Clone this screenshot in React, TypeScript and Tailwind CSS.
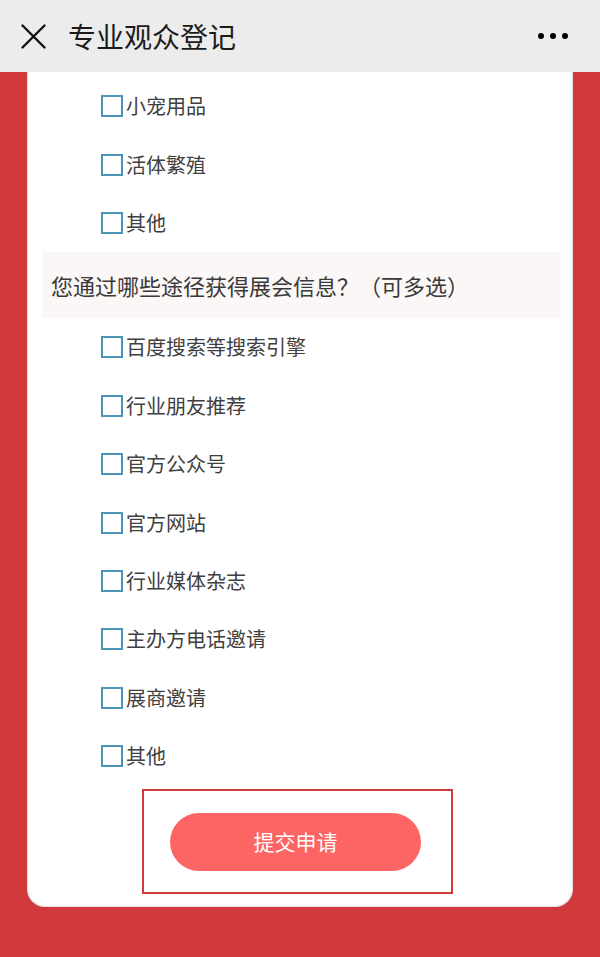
import React from 'react';

const group1 = ['小宠用品', '活体繁殖', '其他'];
const group2 = [
  '百度搜索等搜索引擎',
  '行业朋友推荐',
  '官方公众号',
  '官方网站',
  '行业媒体杂志',
  '主办方电话邀请',
  '展商邀请',
  '其他',
];

const CheckRow: React.FC<{ label: string }> = ({ label }) => (
  <label className="flex h-[58.4px] items-center pl-[73px]">
    <span className="h-[22px] w-[22px] shrink-0 border-2 border-[#4b94b8] bg-white" />
    <span className="ml-[3px] text-[20px] leading-none text-[#404040]">{label}</span>
  </label>
);

const App: React.FC = () => {
  return (
    <div
      className="flex h-[957px] w-[600px] flex-col overflow-hidden bg-[#d03a3d]"
      style={{ fontFamily: '"Noto Sans CJK SC", "Noto Sans", sans-serif' }}
    >
      {/* Header */}
      <div className="flex h-[72px] shrink-0 items-center bg-[#ececec] pl-[21px] pr-[32px]">
        <svg width="25" height="25" viewBox="0 0 25 25" className="shrink-0">
          <path d="M1.5 1.5 L23.5 23.5 M23.5 1.5 L1.5 23.5" stroke="#111" strokeWidth="2.4" strokeLinecap="round" />
        </svg>
        <h1 className="ml-[22px] text-[28px] font-normal leading-none text-[#1b1b1b]">专业观众登记</h1>
        <div className="ml-auto flex items-center gap-[6px]">
          <span className="h-[6px] w-[6px] rounded-full bg-black" />
          <span className="h-[6px] w-[6px] rounded-full bg-black" />
          <span className="h-[6px] w-[6px] rounded-full bg-black" />
        </div>
      </div>

      {/* Card */}
      <div className="ml-[27px] w-[546px] rounded-b-[18px] border-x border-b border-[#e4dede] bg-white pt-[5px] pb-[12px]">
        {group1.map((g) => (
          <CheckRow key={g} label={g} />
        ))}

        <div className="ml-[14px] mr-[12px] flex h-[66px] items-center bg-[#fbf7f6] pl-[9px]">
          <p className="text-[22px] leading-none text-[#3a3a3a]">您通过哪些途径获得展会信息？（可多选）</p>
        </div>

        {group2.map((g) => (
          <CheckRow key={g} label={g} />
        ))}

        <div className="mt-[4px] flex justify-center">
          <div className="ml-[-5px] flex h-[105px] w-[311px] items-center justify-center border-2 border-[#d13a3a]">
            <button className="ml-[-4px] h-[58px] w-[251px] rounded-full bg-[#fd6464] text-[21px] text-white">
              提交申请
            </button>
          </div>
        </div>
      </div>
    </div>
  );
};

export default App;
